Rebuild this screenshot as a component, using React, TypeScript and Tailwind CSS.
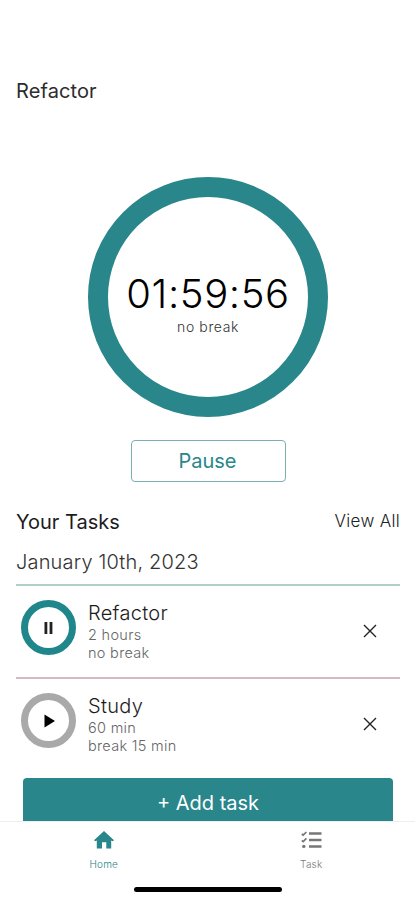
import React, { useState } from "react";

type Task = {
  name: string;
  duration: string;
  rest: string;
  running: boolean;
};

const initialTasks: Task[] = [
  { name: "Refactor", duration: "2 hours", rest: "no break", running: true },
  { name: "Study", duration: "60 min", rest: "break 15 min", running: false },
];

function HomeIcon() {
  return (
    <svg width="20" height="18" viewBox="0 0 20 18" fill="currentColor">
      <path d="M10 0L20 9.2L18.8 10.2L17.2 9.4V17.5H12.3V11.2H8V17.5H2.8V9.4L1.2 10.2L0 9.2z" />
    </svg>
  );
}

function TaskIcon() {
  return (
    <svg width="21" height="18" viewBox="0 0 21 18" fill="none">
      <path
        d="M0.8 3L2.2 4.2L5.4 1M0.8 9.4L2.2 10.6L5.4 7.4"
        stroke="currentColor"
        strokeWidth="1.7"
      />
      <circle cx="2.8" cy="15.4" r="1.7" fill="currentColor" />
      <path
        d="M8 2.6h12.5M8 9h12.5M8 15.4h12.5"
        stroke="currentColor"
        strokeWidth="2.5"
      />
    </svg>
  );
}

function TaskRow({ task, onDelete }: { task: Task; onDelete: () => void }) {
  return (
    <li className="flex h-[93px] items-start border-b-2 border-[#d9b9c1] pt-[14px] pl-[5px] last:border-b-0">
      <button
        className={
          task.running
            ? "flex size-[55px] shrink-0 items-center justify-center rounded-full border-[7px] border-[#1f878b]"
            : "flex size-[55px] shrink-0 items-center justify-center rounded-full border-[7px] border-[#a9a9a9]"
        }
      >
        {task.running ? (
          <svg width="9" height="12" viewBox="0 0 9 12">
            <path d="M0.5 0h2.8v12H0.5zM5.6 0h2.8v12H5.6z" fill="#222" />
          </svg>
        ) : (
          <svg width="11" height="14" viewBox="0 0 11 14" className="ml-[2px]">
            <path d="M0.5 0.5L11 7L0.5 13.5z" fill="#000" />
          </svg>
        )}
      </button>
      <div className="ml-3 flex-1">
        <p className="text-[20px] leading-[26px] tracking-[0.3px] text-[#1c1c1c]">
          {task.name}
        </p>
        <p className="text-[14.5px] leading-[18px] tracking-[0.3px] text-[#666]">
          {task.duration}
        </p>
        <p className="text-[14.5px] leading-[18px] tracking-[0.3px] text-[#666]">
          {task.rest}
        </p>
      </div>
      <button onClick={onDelete} className="mt-[24px] mr-[23px]">
        <svg width="14" height="14" viewBox="0 0 14 14">
          <path d="M1 1l12 12M13 1L1 13" stroke="#222" strokeWidth="1.4" />
        </svg>
      </button>
    </li>
  );
}

export default function App() {
  const [tasks, setTasks] = useState<Task[]>(initialTasks);

  return (
    <div className="flex h-[900px] w-[415px] flex-col overflow-hidden bg-white font-['Inter',sans-serif] font-light">
      <main className="flex min-h-0 flex-1 flex-col overflow-hidden pt-[78px] pr-[15px] pl-4">
        <h1 className="text-[20px] leading-[26px] font-normal tracking-[0.1px] text-[#2c2c2c]">
          Refactor
        </h1>

        <div className="mt-[73px] flex size-60 shrink-0 flex-col items-center self-center rounded-full border-[20px] border-[#29868b] pt-[73px]">
          <p className="text-[40px] leading-[48px] tracking-[0.6px] text-black">
            01:59:56
          </p>
          <p className="mt-px text-[14px] leading-[16px] tracking-[0.6px] text-[#333]">
            no break
          </p>
        </div>

        <button className="mt-[23px] h-[42px] w-[155px] shrink-0 self-center rounded border border-[#7aaeb0] pr-px text-[20px] font-normal text-[#29868b]">
          Pause
        </button>

        <div className="mt-[27px] flex items-start justify-between">
          <h2 className="text-[20px] leading-[26px] font-normal text-[#1c1c1c]">
            Your Tasks
          </h2>
          <button className="text-[17px] leading-[24px] tracking-[0.3px] text-[#222]">
            View All
          </button>
        </div>
        <p className="mt-[14px] text-[20px] leading-[26px] tracking-[0.17px] text-[#333]">
          January 10th, 2023
        </p>

        <ul className="mt-[9px] shrink-0 border-t-2 border-[#b3cfca]">
          {tasks.map((task) => (
            <TaskRow
              key={task.name}
              task={task}
              onDelete={() =>
                setTasks(tasks.filter((t) => t.name !== task.name))
              }
            />
          ))}
        </ul>

        <button className="mt-[6px] ml-[7px] h-[50px] w-[370px] shrink-0 rounded bg-[#29868b] text-[20px] font-normal text-white">
          + Add task
        </button>
      </main>

      <nav className="h-[79px] shrink-0 border-t border-[#eee] bg-white">
        <div className="flex h-[65px]">
          <button className="flex flex-1 flex-col items-center pt-[9px] text-[#29868b]">
            <HomeIcon />
            <span className="mt-[8px] text-[10px] leading-[14px] tracking-[0.2px]">
              Home
            </span>
          </button>
          <button className="flex flex-1 flex-col items-center pt-[9px] text-[#777]">
            <TaskIcon />
            <span className="mt-[8px] text-[10px] leading-[14px] tracking-[0.2px]">
              Task
            </span>
          </button>
        </div>
        <div className="mx-auto h-[5px] w-[148px] rounded-full bg-black" />
      </nav>
    </div>
  );
}
